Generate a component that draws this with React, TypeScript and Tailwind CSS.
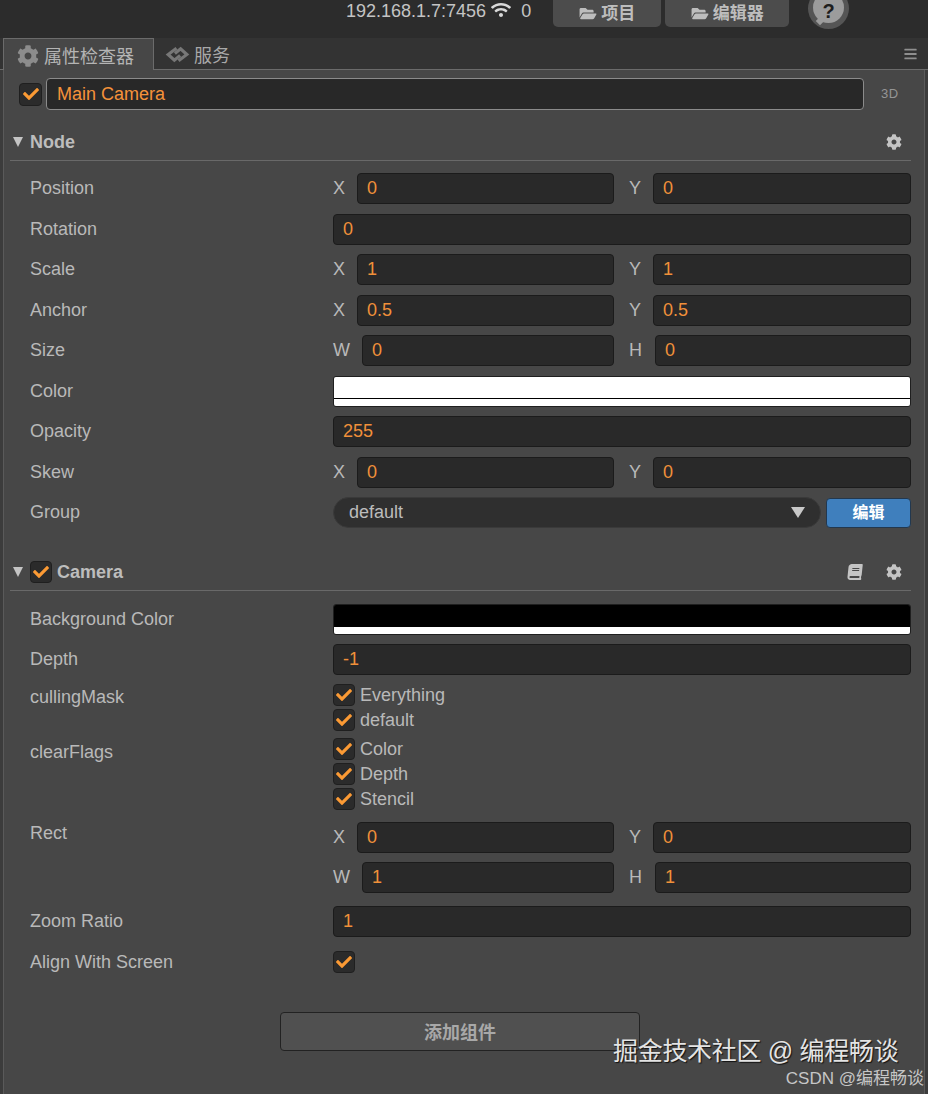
import type { ReactNode } from 'react';
import { FaBars, FaBook, FaCheck, FaCog, FaFolderOpen, FaWifi } from 'react-icons/fa';

const CJK = "font-['Liberation_Sans','Noto_Sans_CJK_SC',sans-serif]";
const FIELD = 'h-[31px] rounded-[4px] border border-[#1b1b1b] bg-[#292929] pl-[9px] flex items-center text-[18px] text-[#f0903a]';

function Check({ size = 'w-[22px] h-[22px]' }: { size?: string }) {
  return (
    <span className={`${size} shrink-0 rounded-[4px] border border-[#1f1f1f] bg-[#2b2b2b] flex items-center justify-center`}>
      <FaCheck className="w-[16px] h-[16px] text-[#fb9a34]" />
    </span>
  );
}

function Field({ value, className = '' }: { value: string; className?: string }) {
  return <div className={`${FIELD} ${className}`}>{value}</div>;
}

function Row({ label, children }: { label: string; children: ReactNode }) {
  return (
    <div className="flex h-[31px] mb-[9.5px] items-center">
      <div className="w-[303px] text-[18px] text-[#b9b9b9]">{label}</div>
      <div className="w-[578px] flex items-center">{children}</div>
    </div>
  );
}

function Pair({ a, b, va, vb }: { a: string; b: string; va: string; vb: string }) {
  const wide = a === 'W';
  return (
    <div className="w-full flex items-center text-[18px] text-[#b9b9b9]">
      <span className={wide ? 'w-[29px]' : 'w-[24px]'}>{a}</span>
      <Field value={va} className={wide ? 'w-[252px]' : 'w-[257px]'} />
      <span className={wide ? 'w-[41px] pl-[15px]' : 'w-[39px] pl-[15px]'}>{b}</span>
      <Field value={vb} className="flex-1" />
    </div>
  );
}

function Swatch({ color }: { color: string }) {
  return (
    <div className="w-full h-[31px] rounded-[3px] border border-[#1f1f1f] flex flex-col overflow-hidden">
      <div className={`${color} h-[21px]`} />
      <div className="flex-1 bg-white border-t border-black" />
    </div>
  );
}

function CheckList({ items }: { items: string[] }) {
  return (
    <div className="flex flex-col gap-[3px]">
      {items.map(t => (
        <div key={t} className="flex items-center gap-[5px] h-[22px] text-[18px] text-[#b9b9b9]">
          <Check />
          <span>{t}</span>
        </div>
      ))}
    </div>
  );
}

function Header({ children, book }: { children: ReactNode; book?: boolean }) {
  return (
    <div className="flex items-center h-[37px] border-b border-[#696969] w-[901px] text-[18px] font-bold text-[#bdbdbd]">
      <span className="w-0 h-0 ml-[3px] mr-[7px] border-x-[5px] border-x-transparent border-t-[10px] border-t-[#c4c4c4]" />
      {children}
      <span className="flex-1" />
      {book && <FaBook className="w-[16px] h-[16px] mr-[23px] text-[#c4c4c4] -skew-x-6" />}
      <FaCog className="w-[16px] h-[16px] mr-[9px] text-[#c4c4c4]" />
    </div>
  );
}

export default function App() {
  return (
    <div className={`${CJK} relative w-[928px] h-[1094px] overflow-hidden bg-[#3c3c3c]`}>
      {/* Top bar */}
      <div className="h-[38px] bg-[#2c2c2c] flex items-start text-[#c4c4c4]">
        <span className="ml-[346px] mt-[-2px] text-[18px]">192.168.1.7:7456</span>
        <FaWifi className="ml-[5px] mt-[2px] w-[20px] h-[16px] text-[#d8d8d8]" />
        <span className="ml-[10px] mt-[-2px] text-[18px]">0</span>
        <button className="ml-[22px] w-[108px] h-[27px] rounded-b-[5px] bg-[#4c4c4c] flex items-center justify-center gap-[4px] text-[17px] font-bold text-[#bdbdbd]">
          <FaFolderOpen className="w-[18px] h-[15px]" />项目
        </button>
        <button className="ml-[4px] w-[124px] h-[27px] rounded-b-[5px] bg-[#4c4c4c] flex items-center justify-center gap-[4px] text-[17px] font-bold text-[#bdbdbd]">
          <FaFolderOpen className="w-[18px] h-[15px]" />编辑器
        </button>
        <span className="relative ml-[19px] mt-[-12px] w-[41px] h-[41px] rounded-full bg-[#555555] flex items-center justify-center">
          <span className="mt-[-2px] w-[31px] h-[31px] rounded-full bg-[#9c9c9c] flex items-end justify-center pb-[2px] text-[20px] leading-none font-bold text-[#1e1e1e]">?</span>
          <span className="absolute left-[9px] bottom-[5px] w-[6px] h-[6px] rotate-45 bg-[#9c9c9c]" />
        </span>
      </div>

      {/* Tabs */}
      <div className="h-[32px] bg-[#333333] flex items-stretch border-b border-[#6b6b6b] relative">
        <div className="ml-[3px] w-[151px] h-[32px] bg-[#474747] border border-b-0 border-[#6b6b6b] flex items-center pl-[13px] pt-[5px] gap-[5px] text-[18px] leading-[22px] text-[#b4b4b4]">
          <FaCog className="w-[22px] h-[22px] text-[#8c8c8c] -mt-[3px]" />
          属性检查器
        </div>
        <div className="flex items-center ml-[11px] pt-[5px] gap-[4px] text-[18px] leading-[22px] text-[#a8a8a8]">
          <svg viewBox="0 0 24 16" className="w-[25px] h-[17px] -mt-[4px] text-[#777777]" fill="none" stroke="currentColor" strokeWidth="3">
            <path d="M11 2 3 8l6 5.5 5.5-4.5" />
            <path d="M13 14 21 8l-6-5.5L9.5 7" />
          </svg>
          服务
        </div>
        <FaBars className="absolute right-[10px] top-[9px] w-[15px] h-[14px] text-[#8f8f8f]" />
      </div>

      {/* Panel */}
      <div className="ml-[3px] w-[922px] h-[1024px] bg-[#474747] border-l border-r border-[#5a5a5a] pt-[8px]">
        <div className="flex items-center h-[32px] pl-[15px]">
          <Check size="w-[23px] h-[23px]" />
          <div className="ml-[4px] w-[818px] h-[32px] rounded-[4px] border border-[#8b8b8b] bg-[#282828] pl-[10px] flex items-center text-[18px] text-[#f5923a]">
            Main Camera
          </div>
          <span className="ml-[17px] text-[13px] tracking-[0.5px] text-[#959595]">3D</span>
        </div>

        <div className="mt-[14px] ml-[6px]">
          <Header>Node</Header>
        </div>

        <div className="pl-[26px] pt-[12px]">
          <Row label="Position"><Pair a="X" b="Y" va="0" vb="0" /></Row>
          <Row label="Rotation"><Field value="0" className="w-full" /></Row>
          <Row label="Scale"><Pair a="X" b="Y" va="1" vb="1" /></Row>
          <Row label="Anchor"><Pair a="X" b="Y" va="0.5" vb="0.5" /></Row>
          <Row label="Size"><Pair a="W" b="H" va="0" vb="0" /></Row>
          <Row label="Color"><Swatch color="bg-white" /></Row>
          <Row label="Opacity"><Field value="255" className="w-full" /></Row>
          <Row label="Skew"><Pair a="X" b="Y" va="0" vb="0" /></Row>
          <Row label="Group">
            <div className="flex-1 h-[31px] rounded-full bg-[#2f2f2f] border border-[#3a3a3a] pl-[15px] pr-[15px] flex items-center justify-between text-[18px] text-[#bcbcbc]">
              default
              <span className="w-0 h-0 border-x-[7px] border-x-transparent border-t-[11px] border-t-[#c8c8c8]" />
            </div>
            <button className={`${CJK} ml-[5px] w-[85px] h-[30px] rounded-[4px] border border-[#22384f] bg-[#3f7fbd] text-[16px] font-bold text-white`}>
              编辑
            </button>
          </Row>
        </div>

        <div className="mt-[26px] ml-[6px]">
          <Header book>
            <Check />
            <span className="ml-[5px]">Camera</span>
          </Header>
        </div>

        <div className="pl-[26px] pt-[12.5px]">
          <Row label="Background Color"><Swatch color="bg-black" /></Row>
          <Row label="Depth"><Field value="-1" className="w-full" /></Row>
          <div className="flex items-start -mt-[0.5px]">
            <div className="w-[303px] text-[18px] leading-[27px] text-[#b9b9b9]">cullingMask</div>
            <CheckList items={['Everything', 'default']} />
          </div>
          <div className="flex items-start mt-[7px] mb-[12px]">
            <div className="w-[303px] pt-[1px] text-[18px] text-[#b9b9b9]">clearFlags</div>
            <CheckList items={['Color', 'Depth', 'Stencil']} />
          </div>
          <div className="flex items-start">
            <div className="w-[303px] -mt-[2px] text-[18px] text-[#b9b9b9]">Rect</div>
            <div className="w-[578px]">
              <div className="mb-[9px]"><Pair a="X" b="Y" va="0" vb="0" /></div>
              <Pair a="W" b="H" va="1" vb="1" />
            </div>
          </div>
          <div className="mt-[13px]">
            <Row label="Zoom Ratio"><Field value="1" className="w-full" /></Row>
            <Row label="Align With Screen"><Check /></Row>
          </div>
        </div>

        <button className={`${CJK} block mt-[34px] ml-[276px] w-[360px] h-[39px] rounded-[4px] border border-[#222222] bg-[#505050] pt-[4px] text-[18px] font-bold text-[#a8a8a8]`}>
          添加组件
        </button>
      </div>

      {/* Watermarks */}
      <div className="absolute left-[613px] top-[1034px] text-[25px] leading-[34px] tracking-[-0.3px] text-[#e4e4e4] [text-shadow:1px_1px_1px_#111]">
        掘金技术社区 @ 编程畅谈
      </div>
      <div className="absolute right-[4px] top-[1068px] text-[17px] leading-[22px] text-[#c6c6c6]">
        CSDN @编程畅谈
      </div>
    </div>
  );
}
